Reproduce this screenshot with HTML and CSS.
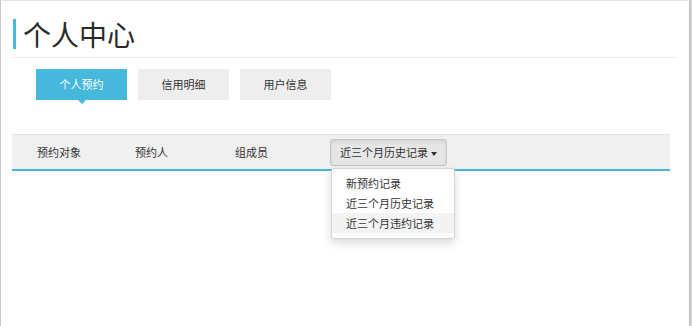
FILE: index.html
```html
<!DOCTYPE html>
<html lang="zh-CN">
<head>
    <meta charset="UTF-8">
    <meta name="viewport" content="width=device-width, initial-scale=1.0">
    <title>个人中心</title>
    <link rel="stylesheet" href="styles.css">
</head>
<body>

<div class="panel">
    <!-- 标题 -->
    <h1 class="page-title">个人中心</h1>
    <hr class="title-line">

    <!-- 选项卡 -->
    <ul class="tabs">
        <li class="tab active">个人预约</li>
        <li class="tab">信用明细</li>
        <li class="tab">用户信息</li>
    </ul>

    <!-- 表头 -->
    <div class="table-head">
        <span class="col col-target">预约对象</span>
        <span class="col col-person">预约人</span>
        <span class="col col-member">组成员</span>
        <div class="col dropdown">
            <button class="dropdown-toggle">近三个月历史记录 <span class="caret"></span></button>
            <ul class="dropdown-menu">
                <li>新预约记录</li>
                <li>近三个月历史记录</li>
                <li class="hover">近三个月违约记录</li>
            </ul>
        </div>
    </div>
</div>

</body>
</html>
```

FILE: styles.css
```css
/* 全局 */
* {
    margin: 0;
    padding: 0;
    box-sizing: border-box;
}

body {
    font-family: "Noto Sans CJK SC", "Liberation Sans", sans-serif;
    background-color: #d6d6d6;
    color: #333;
    width: 692px;
    height: 326px;
    overflow: hidden;
}

ul {
    list-style: none;
}

.panel {
    width: 689px;
    height: 326px;
    background-color: #fff;
    border-left: 1px solid #c8c8c8;
    border-top: 1px solid #e4e4e4;
    box-shadow: 1px 0 2px rgba(0, 0, 0, 0.15);
    padding: 18px 14px 0 11px;
}

/* 标题 */
.page-title {
    font-size: 28px;
    font-weight: normal;
    line-height: 30px;
    height: 30px;
    border-left: 3px solid #45b8dc;
    padding-left: 7px;
    margin-left: 1px;
    color: #2a2a2a;
}

.title-line {
    border: none;
    border-top: 1px solid #e8e8e8;
    margin-top: 8px;
    width: 665px;
}

/* 选项卡 */
.tabs {
    display: flex;
    gap: 11px;
    margin-top: 11px;
    padding-left: 24px;
}

.tab {
    position: relative;
    width: 91px;
    height: 31px;
    line-height: 31px;
    text-align: center;
    font-size: 11px;
    background-color: #eee;
    color: #333;
}

.tab.active {
    background-color: #45b8dc;
    color: #fff;
}

.tab.active::after {
    content: "";
    position: absolute;
    left: 42px;
    bottom: -4px;
    border-top: 4px solid #45b8dc;
    border-left: 4px solid transparent;
    border-right: 4px solid transparent;
}

/* 表头 */
.table-head {
    display: flex;
    align-items: center;
    width: 658px;
    height: 37px;
    margin-top: 34px;
    padding-left: 25px;
    background-color: #f0f0f0;
    border-top: 1px solid #e2e2e2;
    border-bottom: 2px solid #45b8dc;
    font-size: 11px;
}

.col-target {
    width: 98px;
}

.col-person {
    width: 100px;
}

.col-member {
    width: 95px;
}

.dropdown {
    position: relative;
}

.dropdown-toggle {
    font-family: inherit;
    font-size: 11px;
    color: #333;
    width: 117px;
    height: 27px;
    padding: 0 0 0 9px;
    text-align: left;
    background-color: #e6e6e6;
    border: 1px solid #c4c4c4;
    border-radius: 3px;
    box-shadow: inset 0 2px 4px rgba(0, 0, 0, 0.08);
}

.caret {
    display: inline-block;
    vertical-align: middle;
    margin-left: 1px;
    border-top: 4px solid #333;
    border-left: 3px solid transparent;
    border-right: 3px solid transparent;
}

.dropdown-menu {
    position: absolute;
    top: 29px;
    left: 1px;
    width: 124px;
    padding: 4px 0 5px;
    background-color: #fff;
    border: 1px solid #d4d4d4;
    border-radius: 3px;
    box-shadow: 0 4px 10px rgba(0, 0, 0, 0.15);
    z-index: 10;
}

.dropdown-menu li {
    height: 20px;
    line-height: 20px;
    padding-left: 14px;
    font-size: 11px;
    color: #333;
    white-space: nowrap;
}

.dropdown-menu li.hover {
    background-color: #f3f3f3;
}
```
